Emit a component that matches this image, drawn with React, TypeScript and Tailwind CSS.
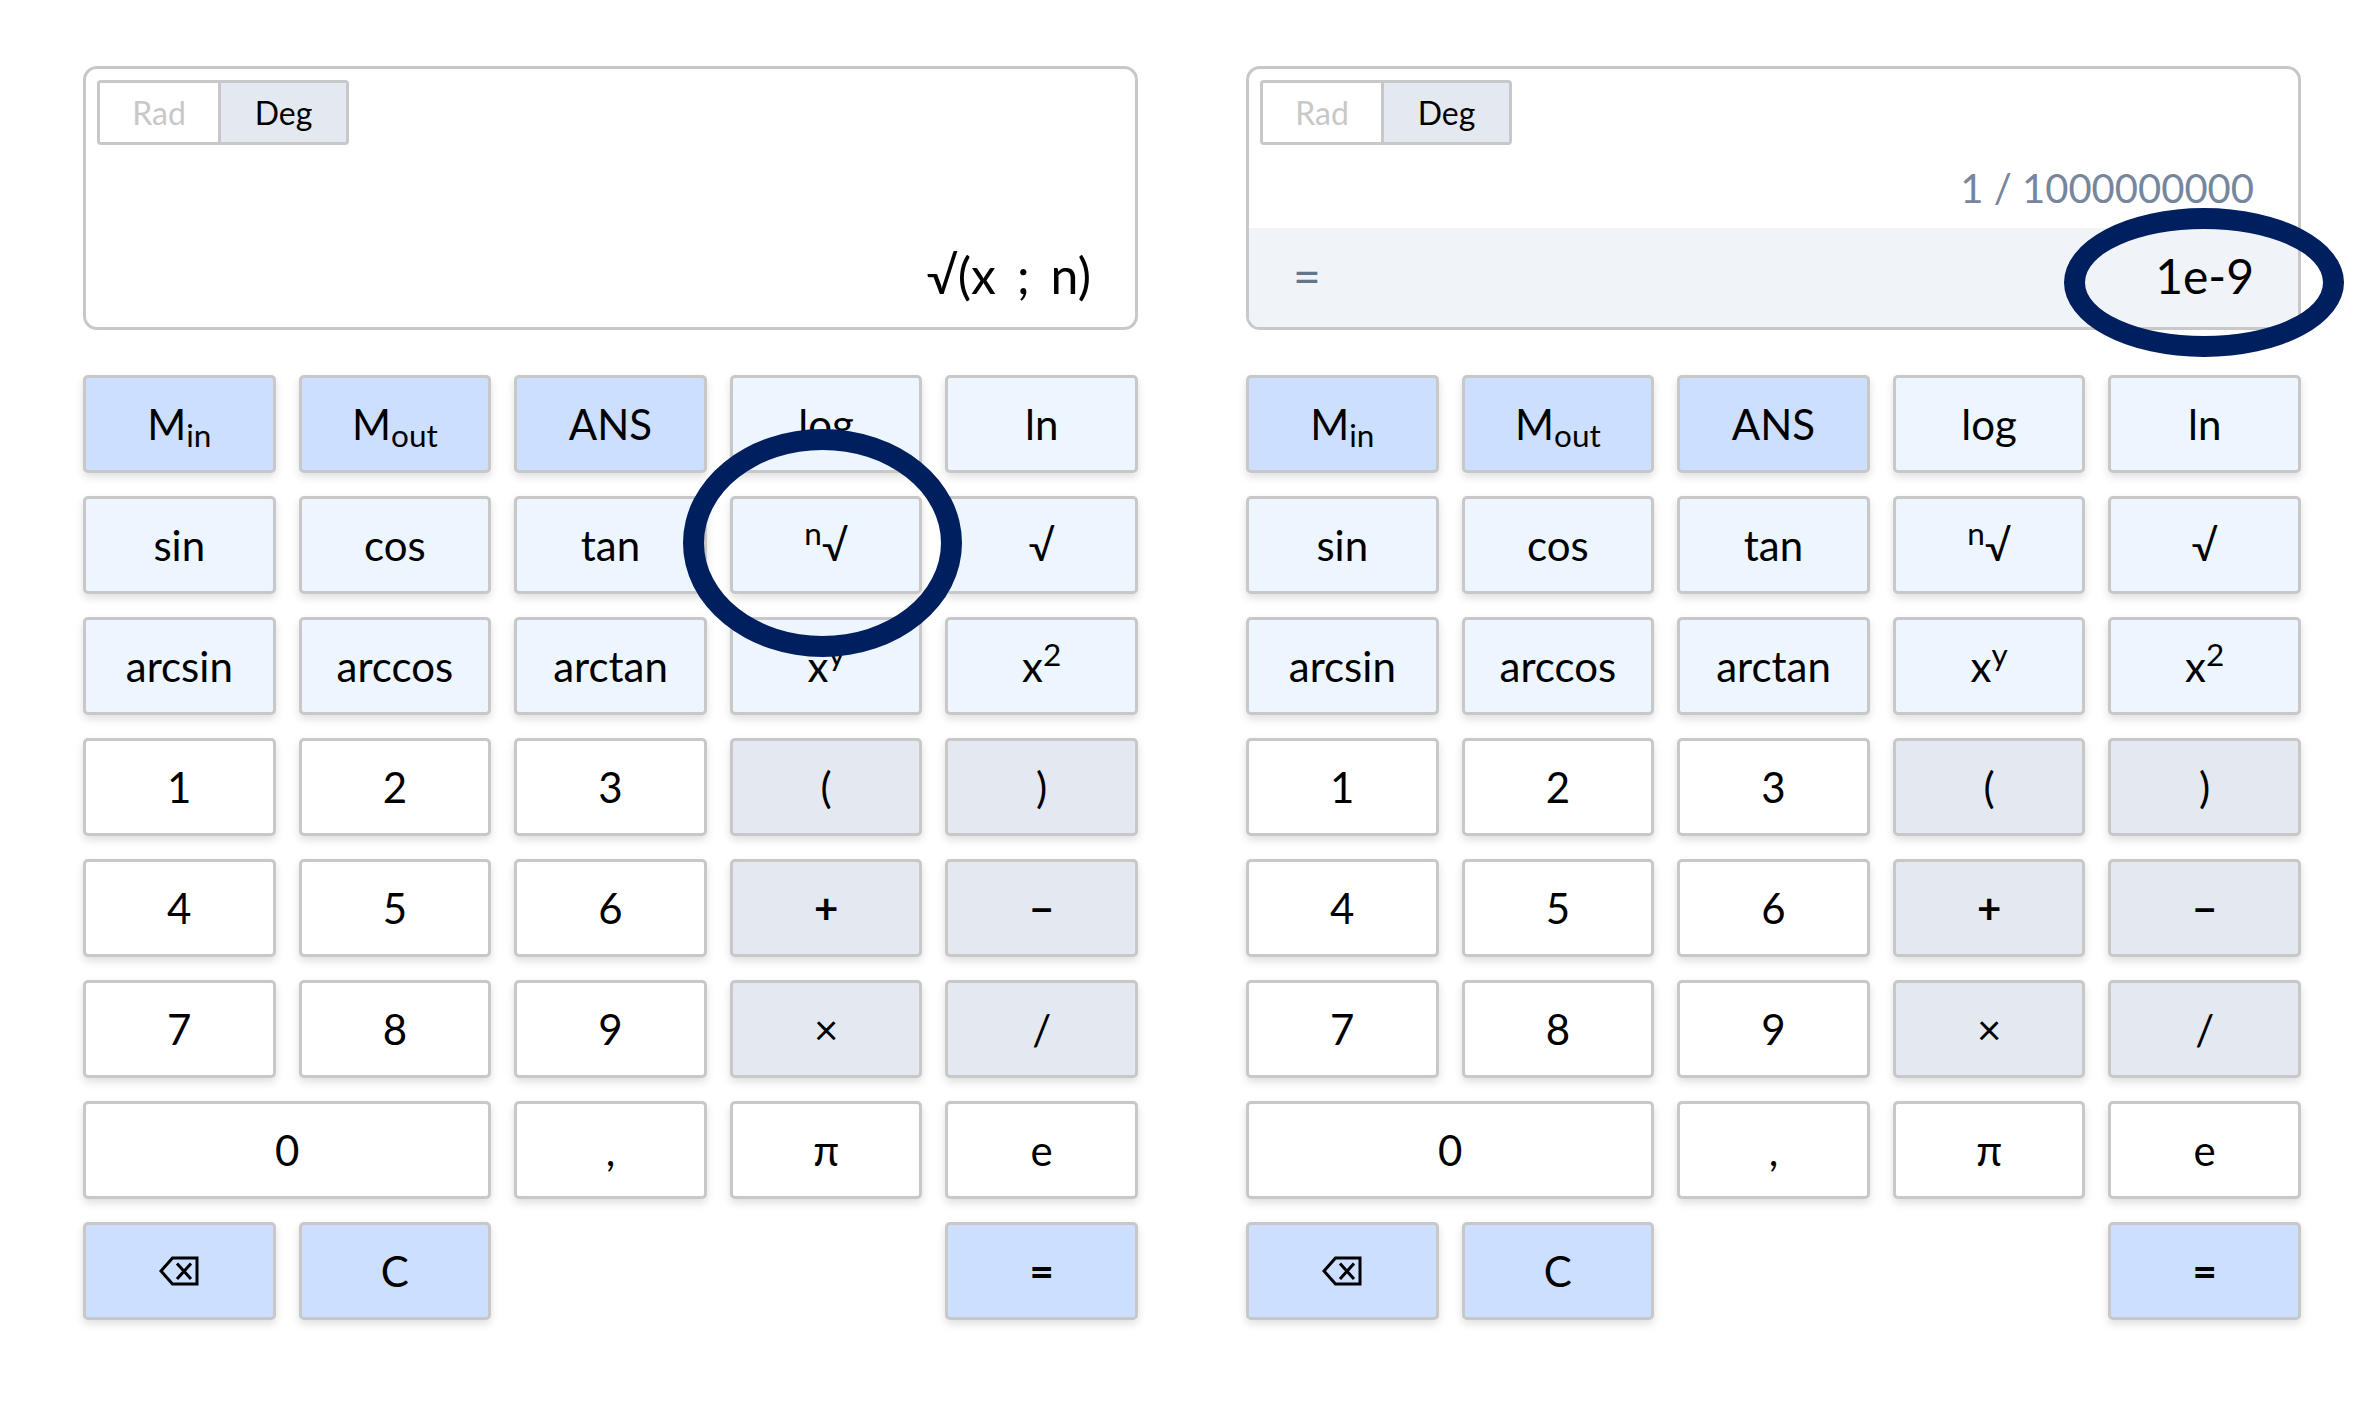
import { type ReactNode } from "react";
import clsx from "clsx";

type Tone = "accent" | "func" | "digit" | "op";

type Key = {
  id: string;
  label: ReactNode;
  tone: Tone;
  name?: string;
  className?: string;
};

const tones: Record<Tone, string> = {
  accent: "bg-[#ccdffe]",
  func: "bg-[#edf5ff]",
  digit: "bg-white",
  op: "bg-[#e4e9f1]",
};

const BackspaceIcon = () => (
  <svg width="40" height="30" viewBox="0 0 40 30" fill="none" stroke="currentColor" strokeWidth="3" aria-hidden="true">
    <path d="M13.5 2H38v26H13.5L2 15z" />
    <path d="M18 7.5l14 15.5M32 7.5L18 23" strokeWidth="3" />
  </svg>
);

const keys: Key[] = [
  { id: "min", label: <span>M<sub>in</sub></span>, tone: "accent" },
  { id: "mout", label: <span>M<sub>out</sub></span>, tone: "accent" },
  { id: "ans", label: "ANS", tone: "accent" },
  { id: "log", label: "log", tone: "func" },
  { id: "ln", label: "ln", tone: "func" },
  { id: "sin", label: "sin", tone: "func" },
  { id: "cos", label: "cos", tone: "func" },
  { id: "tan", label: "tan", tone: "func" },
  { id: "nroot", label: <span><sup>n</sup>√</span>, tone: "func" },
  { id: "sqrt", label: "√", tone: "func" },
  { id: "arcsin", label: "arcsin", tone: "func" },
  { id: "arccos", label: "arccos", tone: "func" },
  { id: "arctan", label: "arctan", tone: "func" },
  { id: "pow", label: <span>x<sup>y</sup></span>, tone: "func" },
  { id: "square", label: <span>x<sup>2</sup></span>, tone: "func" },
  { id: "1", label: "1", tone: "digit" },
  { id: "2", label: "2", tone: "digit" },
  { id: "3", label: "3", tone: "digit" },
  { id: "open", label: "(", tone: "op" },
  { id: "close", label: ")", tone: "op" },
  { id: "4", label: "4", tone: "digit" },
  { id: "5", label: "5", tone: "digit" },
  { id: "6", label: "6", tone: "digit" },
  { id: "plus", label: "+", tone: "op", className: "font-bold" },
  { id: "minus", label: "−", tone: "op", className: "font-bold" },
  { id: "7", label: "7", tone: "digit" },
  { id: "8", label: "8", tone: "digit" },
  { id: "9", label: "9", tone: "digit" },
  { id: "times", label: "×", tone: "op" },
  { id: "divide", label: "/", tone: "op" },
  { id: "0", label: "0", tone: "digit", className: "col-span-2" },
  { id: "comma", label: ",", tone: "digit" },
  { id: "pi", label: "π", tone: "digit" },
  { id: "e", label: "e", tone: "digit" },
  { id: "back", label: <BackspaceIcon />, tone: "accent", name: "Backspace" },
  { id: "clear", label: "C", tone: "accent" },
  { id: "equals", label: "=", tone: "accent", className: "col-start-5 font-bold" },
];

const AngleToggle = () => (
  <div className="m-[11px] flex h-[65px] w-[252px] overflow-hidden rounded-[4px] border-[3px] border-[#c8c8c8] text-[32px]">
    <button aria-pressed="false" className="w-[118px] bg-white text-[#c8c8c8]">
      Rad
    </button>
    <button aria-pressed="true" className="flex-1 border-l-[3px] border-[#c8c8c8] bg-[#e4e9f1]">
      Deg
    </button>
  </div>
);

// Ellipse marker drawn over the control it points out
const Ring = ({ className }: { className: string }) => (
  <span
    className={clsx("pointer-events-none absolute z-10 rounded-[50%] border-[21px] border-[#001f5f]", className)}
  />
);

type CalculatorProps = {
  expression: ReactNode;
  result?: string;
  ringedKey?: string;
};

const Calculator = ({ expression, result, ringedKey }: CalculatorProps) => (
  <section className="min-w-0 flex-1">
    <div className="relative flex h-[264px] flex-col rounded-[14px] border-[3px] border-[#c8c8c8] bg-white">
      <AngleToggle />
      {result ? (
        <>
          <div className="flex flex-1 items-center justify-end px-11 pb-2 text-[40px] text-[#76869c]">
            {expression}
          </div>
          <div className="flex h-[99px] items-center justify-between rounded-b-[11px] bg-[#f0f4f9] px-11 pb-1 text-[48px]">
            <span className="text-[#64748b]">=</span>
            <output>{result}</output>
          </div>
          <Ring className="-right-[46px] top-[139px] h-[149px] w-[280px]" />
        </>
      ) : (
        <div className="mt-auto flex h-[99px] items-center justify-end px-11 pb-1 text-[50px]">
          <output>{expression}</output>
        </div>
      )}
    </div>
    <div className="mt-[45px] grid auto-rows-[98px] grid-cols-5 gap-[23px] text-[42px]">
      {keys.map(({ id, label, tone, name, className }) => (
        <button
          key={id}
          aria-label={name}
          className={clsx(
            "relative flex items-center justify-center rounded-[5px] border-[3px] border-[#c8c8c8] shadow-[0_4px_8px_rgba(0,0,0,0.13)]",
            tones[tone],
            className,
          )}
        >
          {label}
          {id === ringedKey && <Ring className="-left-[50px] -top-[70px] h-[228px] w-[279px]" />}
        </button>
      ))}
    </div>
  </section>
);

const App = () => (
  <main className="flex min-h-screen items-start gap-[108px] bg-white pb-[100px] pl-[83px] pr-16 pt-[66px] font-[Lato,sans-serif] text-black">
    <Calculator
      expression={
        <>
          √(x <span className="mx-2">;</span> n)
        </>
      }
      ringedKey="nroot"
    />
    <Calculator expression="1 / 1000000000" result="1e-9" />
  </main>
);

export default App;
